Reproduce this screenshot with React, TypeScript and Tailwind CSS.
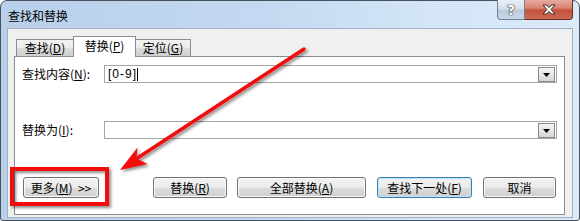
import React from "react";

const btnBase =
  "h-[21px] flex items-center justify-center rounded-[3px] border text-[12px] leading-none bg-[linear-gradient(to_bottom,#f2f2f2_0%,#ebebeb_50%,#dddddd_50%,#cfcfcf_100%)]";

function Btn({ w, children, focused, className = "" }: { w: string; children: React.ReactNode; focused?: boolean; className?: string }) {
  return (
    <div
      className={`${btnBase} ${w} ${className} ${
        focused
          ? "border-[#3c7fb1] shadow-[inset_0_0_0_1px_#bfe4fa]"
          : "border-[#707070] shadow-[inset_0_0_0_1px_#fbfbfb]"
      }`}
    >
      {children}
    </div>
  );
}

function Combo({ children }: { children?: React.ReactNode }) {
  return (
    <div className="flex-1 h-[18px] border border-[#a5a5a5] bg-white flex items-center pl-[3px] pr-px">
      <div className="flex-1 flex items-center text-[12px] leading-none">{children}</div>
      <div className="w-[17px] h-[15px] border border-[#8a8a8a] bg-[linear-gradient(to_bottom,#f4f4f4_0%,#e6e6e6_50%,#d6d6d6_100%)] flex items-center justify-center">
        <svg width="7" height="4" viewBox="0 0 7 4" className="mt-[2px]">
          <polygon points="0,0 7,0 3.5,4" fill="#000" />
        </svg>
      </div>
    </div>
  );
}

export default function App() {
  return (
    <div className="w-[580px] h-[221px] relative overflow-hidden bg-white font-['Noto_Sans_CJK_SC','Noto_Sans',sans-serif] text-[12px] text-black">
      <div className="w-full h-full rounded-t-[7px] rounded-b-[3px] border border-[#48525e] bg-[linear-gradient(to_right,#b8d0ea_0%,#c3d9f1_45%,#d4e6f8_75%,#dbeaf9_100%)] flex flex-col">
        {/* title bar */}
        <div className="h-[27px] flex items-start shrink-0">
          <div className="pl-[7px] pt-[8px] leading-[14px] text-[12px] text-black">查找和替换</div>
          <div className="ml-auto mr-[6px] -mt-px flex">
            <div className="w-[28px] h-[20px] rounded-bl-[4px] border border-t-0 border-[#6f8196] bg-[linear-gradient(to_bottom,#e8eef5_0%,#d6e0eb_45%,#bccbdc_55%,#c9d7e6_100%)] flex items-center justify-center">
              <span className="text-white font-bold text-[14px] leading-none [text-shadow:0_0_1px_#222,0_0_1px_#222,0_0_1px_#222] font-['DejaVu_Sans',sans-serif]">?</span>
            </div>
            <div className="w-[48px] h-[20px] rounded-br-[4px] border border-l-0 border-t-0 border-[#6b2c22] bg-[linear-gradient(to_bottom,#e6aa9e_0%,#d98572_40%,#c4503c_55%,#cf6a55_100%)] flex items-center justify-center">
              <svg width="14" height="11" viewBox="0 0 14 11">
                <path
                  d="M1 1 H4.5 L7 3.6 L9.5 1 H13 L9 5.5 L13 10 H9.5 L7 7.4 L4.5 10 H1 L5 5.5 Z"
                  fill="#fff"
                  stroke="#3a2a28"
                  strokeWidth="1"
                  strokeLinejoin="round"
                />
              </svg>
            </div>
          </div>
        </div>

        {/* client area */}
        <div className="flex-1 mx-[6px] mb-[2px] border border-[#9fb0c4] bg-[#f0f0f0] flex flex-col pl-[6px] pr-[7px] pt-[7px] pb-[2px]">
          {/* tabs */}
          <div className="h-[21px] -mb-px flex items-end relative z-10 pl-[2px]">
            <div className="w-[57px] h-[17px] mb-px border-l border-t border-[#898c95] bg-[linear-gradient(to_bottom,#f2f2f2_0%,#ebebeb_50%,#dddddd_50%,#cfcfcf_100%)] flex items-center justify-center leading-none">
              查找(<u>D</u>)
            </div>
            <div className="w-[63px] h-[21px] border-l border-t border-r border-[#898c95] bg-white flex items-center justify-center leading-none pb-[2px]">
              替换(<u>P</u>)
            </div>
            <div className="w-[55px] h-[17px] mb-px border-t border-r border-[#898c95] bg-[linear-gradient(to_bottom,#f2f2f2_0%,#ebebeb_50%,#dddddd_50%,#cfcfcf_100%)] flex items-center justify-center leading-none">
              定位(<u>G</u>)
            </div>
          </div>

          {/* panel */}
          <div className="flex-1 border border-[#898c95] bg-white flex flex-col pt-[8px] pl-[7px] pr-[7px]">
            <div className="flex items-center">
              <div className="w-[82px] leading-none">查找内容(<u>N</u>):</div>
              <Combo>
                <span className="font-['Liberation_Sans',sans-serif] text-[12px] tracking-[1px]">[0-9]</span>
                <span className="inline-block w-px h-[13px] bg-black" />
              </Combo>
            </div>
            <div className="flex items-center mt-[38px]">
              <div className="w-[82px] leading-none">替换为(<u>I</u>):</div>
              <Combo />
            </div>
            <div className="flex items-center mt-[38px] pl-px">
              <Btn w="w-[76px]">
                更多(<u>M</u>)&nbsp;&nbsp;&gt;&gt;
              </Btn>
              <Btn w="w-[74px]" className="ml-[54px]">
                替换(<u>R</u>)
              </Btn>
              <Btn w="w-[129px]" className="ml-[10px]">
                全部替换(<u>A</u>)
              </Btn>
              <Btn w="w-[95px]" className="ml-[11px]" focused>
                查找下一处(<u>F</u>)
              </Btn>
              <Btn w="w-[73px]" className="ml-[11px]">
                取消
              </Btn>
            </div>
          </div>
        </div>
      </div>

      {/* annotation overlay */}
      <svg className="absolute inset-0 pointer-events-none" width="580" height="221" viewBox="0 0 580 221">
        <defs>
          <filter id="sh" x="-20%" y="-20%" width="140%" height="140%">
            <feDropShadow dx="2" dy="2" stdDeviation="1.5" floodColor="#000" floodOpacity="0.45" />
          </filter>
        </defs>
        <g filter="url(#sh)">
          <rect x="12" y="169" width="95" height="35" fill="none" stroke="#f20c0c" strokeWidth="4" />
          <line x1="304" y1="49" x2="136" y2="159" stroke="#f20c0c" strokeWidth="3.5" strokeLinecap="round" />
          <polygon points="120,170 147.5,164 136.5,158.5 137.5,147.5" fill="#f20c0c" />
        </g>
      </svg>
    </div>
  );
}
